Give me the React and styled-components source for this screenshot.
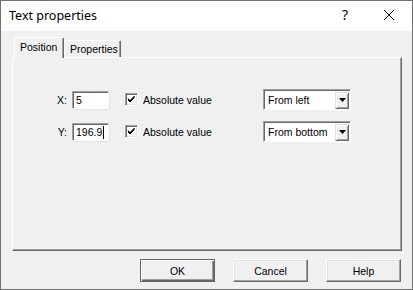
import React from 'react';
import styled, { createGlobalStyle } from 'styled-components';

const GlobalStyle = createGlobalStyle`
  html, body {
    margin: 0;
    padding: 0;
    background: #f0f0f0;
  }
`;

const Window = styled.div`
  width: 413px;
  height: 290px;
  box-sizing: border-box;
  border: 1px solid #6f6f6f;
  background: #f0f0f0;
  display: flex;
  flex-direction: column;
  font-family: "Liberation Sans", Arial, sans-serif;
  font-size: 10.5px;
  color: #000;
`;

const TitleBar = styled.div`
  height: 30px;
  flex: none;
  background: #fff;
  display: flex;
  align-items: center;
  padding-left: 8px;
`;

const Title = styled.div`
  flex: 1;
  font-family: "Noto Sans", "Open Sans", sans-serif;
  font-size: 12.5px;
  padding-bottom: 2px;
`;

const HelpGlyph = styled.div`
  width: 14px;
  margin-right: 31px;
  font-family: "Noto Sans", sans-serif;
  font-size: 14px;
  text-align: center;
  padding-bottom: 3px;
`;

const CloseBox = styled.div`
  width: 12px;
  height: 12px;
  margin-right: 17px;
  margin-bottom: 3px;
  display: flex;
`;

const Body = styled.div`
  flex: 1;
  display: flex;
  flex-direction: column;
  padding: 0 10px 0 11px;
`;

const TabStrip = styled.div`
  height: 26px;
  display: flex;
  align-items: flex-end;
  padding-left: 2px;
  position: relative;
  z-index: 1;
`;

const Tab = styled.div`
  box-sizing: border-box;
  height: ${p => (p.$active ? '21px' : '17px')};
  margin-bottom: ${p => (p.$active ? '-1px' : '0')};
  padding: ${p => (p.$active ? '3px 6px 0 5px' : '2px 5px 0 5px')};
  width: ${p => p.$w}px;
  background: #f0f0f0;
  border-left: 1px solid #fff;
  border-top: 1px solid #fff;
  border-right: 1px solid #696969;
  box-shadow: inset -1px 0 0 #a0a0a0;
  border-radius: 2px 2px 0 0;
  white-space: nowrap;
`;

const Panel = styled.div`
  box-sizing: border-box;
  height: 194px;
  border-top: 1px solid #fff;
  border-left: 1px solid #fff;
  border-right: 1px solid #696969;
  border-bottom: 1px solid #696969;
  box-shadow: inset -1px -1px 0 #a0a0a0;
  padding-top: 31px;
  display: flex;
  flex-direction: column;
  gap: 11px;
`;

const Row = styled.div`
  height: 21px;
  display: flex;
  align-items: center;
`;

const FieldLabel = styled.div`
  width: 54px;
  text-align: right;
  margin-right: 5px;
`;

const TextField = styled.div`
  box-sizing: border-box;
  width: 37px;
  height: 18px;
  background: #fff;
  border-top: 1px solid #a0a0a0;
  border-left: 1px solid #a0a0a0;
  border-right: 1px solid #fff;
  border-bottom: 1px solid #fff;
  box-shadow: inset 1px 1px 0 #696969, 1px 1px 0 #e3e3e3;
  padding: 1px 0 0 3px;
  display: flex;
  align-items: center;
`;

const Caret = styled.span`
  display: inline-block;
  width: 1px;
  height: 13px;
  background: #000;
  margin-left: 1px;
`;

const CheckBox = styled.div`
  box-sizing: border-box;
  width: 13px;
  height: 13px;
  margin-left: 16px;
  background: #fff;
  border-top: 1px solid #a0a0a0;
  border-left: 1px solid #a0a0a0;
  border-right: 1px solid #fff;
  border-bottom: 1px solid #fff;
  box-shadow: inset 1px 1px 0 #696969, inset -1px -1px 0 #e3e3e3;
  display: flex;
  align-items: center;
  justify-content: center;
`;

const CheckLabel = styled.div`
  width: 120px;
  margin-left: 5px;
  white-space: nowrap;
`;

const Select = styled.div`
  box-sizing: border-box;
  width: 88px;
  height: 21px;
  background: #fff;
  border-top: 1px solid #a0a0a0;
  border-left: 1px solid #a0a0a0;
  border-right: 1px solid #fff;
  border-bottom: 1px solid #fff;
  box-shadow: inset 1px 1px 0 #696969;
  display: flex;
  align-items: center;
  padding: 1px 1px 0 4px;
`;

const SelectText = styled.div`
  flex: 1;
  white-space: nowrap;
  overflow: hidden;
`;

const ArrowButton = styled.div`
  box-sizing: border-box;
  flex: none;
  width: 14px;
  height: 17px;
  background: #f0f0f0;
  border-top: 1px solid #e3e3e3;
  border-left: 1px solid #e3e3e3;
  border-right: 1px solid #696969;
  border-bottom: 1px solid #696969;
  box-shadow: inset 1px 1px 0 #fff, inset -1px -1px 0 #a0a0a0;
  display: flex;
  align-items: center;
  justify-content: center;
`;

const Footer = styled.div`
  display: flex;
  justify-content: flex-end;
  gap: 18px;
  padding: 8px 1px 0 0;
`;

const Button = styled.div`
  box-sizing: border-box;
  width: 75px;
  height: 23px;
  display: flex;
  align-items: center;
  justify-content: center;
  background: #f0f0f0;
  border: 1px solid #646464;
  box-shadow: inset 1px 1px 0 #fff, inset -1px -1px 0 #696969, inset -2px -2px 0 #a0a0a0;
  ${p =>
    !p.$default &&
    `
    border-top-color: #fff;
    border-left-color: #fff;
    border-right-color: #696969;
    border-bottom-color: #696969;
    box-shadow: inset -1px -1px 0 #a0a0a0, inset 1px 1px 0 #e3e3e3;
  `}
`;

function Check() {
  return (
    <svg width="9" height="9" viewBox="0 0 9 9">
      <path d="M1 4 L3 6 L7.5 1.5 M1 5 L3 7 L7.5 2.5 M1 3.5 L3 5.5 L7.5 1" stroke="#000" strokeWidth="1" fill="none" />
    </svg>
  );
}

function Arrow() {
  return (
    <svg width="7" height="4" viewBox="0 0 7 4">
      <path d="M0 0 H7 L3.5 4 Z" fill="#000" />
    </svg>
  );
}

function PositionRow({ axis, value, anchor, focused }) {
  return (
    <Row>
      <FieldLabel>{axis}:</FieldLabel>
      <TextField>
        {value}
        {focused && <Caret />}
      </TextField>
      <CheckBox>
        <Check />
      </CheckBox>
      <CheckLabel>Absolute value</CheckLabel>
      <Select>
        <SelectText>{anchor}</SelectText>
        <ArrowButton>
          <Arrow />
        </ArrowButton>
      </Select>
    </Row>
  );
}

export default function App() {
  return (
    <>
      <GlobalStyle />
      <Window>
        <TitleBar>
          <Title>Text properties</Title>
          <HelpGlyph>?</HelpGlyph>
          <CloseBox>
            <svg width="12" height="12" viewBox="0 0 12 12">
              <path d="M1 1 L11 11 M11 1 L1 11" stroke="#000" strokeWidth="1" />
            </svg>
          </CloseBox>
        </TitleBar>
        <Body>
          <TabStrip>
            <Tab $active $w={50}>Position</Tab>
            <Tab $w={57}>Properties</Tab>
          </TabStrip>
          <Panel>
            <PositionRow axis="X" value="5" anchor="From left" />
            <PositionRow axis="Y" value="196.9" anchor="From bottom" focused />
          </Panel>
          <Footer>
            <Button $default>OK</Button>
            <Button>Cancel</Button>
            <Button>Help</Button>
          </Footer>
        </Body>
      </Window>
    </>
  );
}
